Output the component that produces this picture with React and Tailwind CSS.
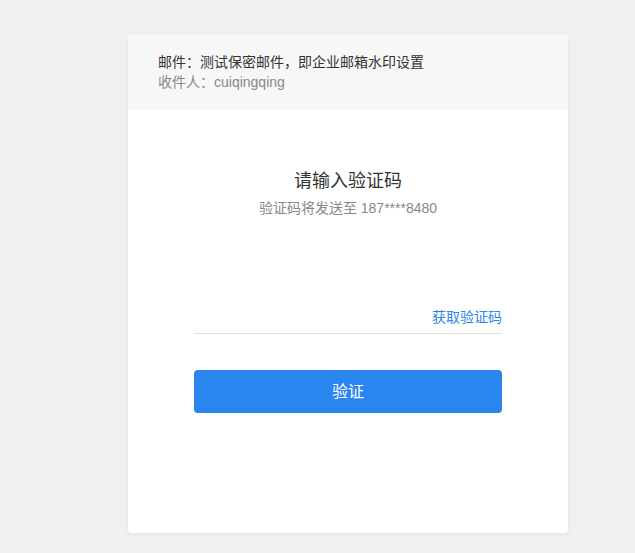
export default function App() {
  return (
    <div
      className="min-h-[553px] bg-[#f0f0f0] pt-[34px] pb-[20px]"
      style={{ fontFamily: '"Liberation Sans", Arial, "Noto Sans CJK SC", sans-serif' }}
    >
      <div className="ml-[128px] w-[440px] overflow-hidden rounded-[4px] bg-white shadow-[0_1px_4px_rgba(0,0,0,0.06)]">
        <div className="bg-[#f7f7f7] px-[30px] py-[18px] text-[14px] leading-[20px]">
          <div className="text-[#333]">邮件：测试保密邮件，即企业邮箱水印设置</div>
          <div className="text-[#888]">收件人：cuiqingqing</div>
        </div>
        <div className="px-[66px] pt-[58px] pb-[120px]">
          <div className="text-center text-[18px] leading-[26px] text-[#333]">请输入验证码</div>
          <div className="mt-[4px] text-center text-[14px] leading-[20px] text-[#888]">验证码将发送至 187****8480</div>
          <div className="mt-[86px] flex h-[30px] items-center border-b border-[#e0e0e0]">
            <input className="min-w-0 flex-1 bg-transparent text-[14px] outline-none" />
            <span className="mb-[3px] text-[14px] leading-[20px] text-[#2a86e8]">获取验证码</span>
          </div>
          <button
            type="button"
            className="mt-[36px] h-[43px] w-full rounded-[4px] bg-[#2a86ee] text-[16px] text-white"
          >
            验证
          </button>
        </div>
      </div>
    </div>
  )
}
